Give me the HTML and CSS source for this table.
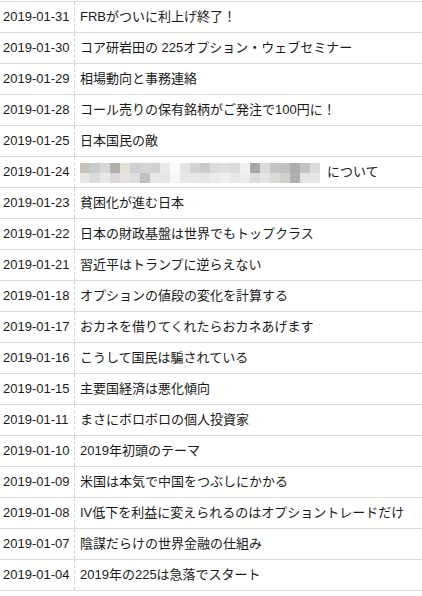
FILE: index.html
```html
<html>
	<head>
	<meta charset="utf-8"/>
		<link rel="stylesheet" href="styles.css">
	</head>
	<body>
		<div class="list">
			<div class="row"><div class="date">2019-01-31</div><div class="title">FRBがついに利上げ終了！</div></div>
			<div class="row"><div class="date">2019-01-30</div><div class="title">コア研岩田の 225オプション・ウェブセミナー</div></div>
			<div class="row"><div class="date">2019-01-29</div><div class="title">相場動向と事務連絡</div></div>
			<div class="row"><div class="date">2019-01-28</div><div class="title">コール売りの保有銘柄がご発注で100円に！</div></div>
			<div class="row"><div class="date">2019-01-25</div><div class="title">日本国民の敵</div></div>
			<div class="row"><div class="date">2019-01-24</div><div class="title">
				<svg class="mosaic" width="240" height="20" viewBox="0 0 240 20">
					<g>
						<rect x="0" y="0" width="10" height="10" fill="#c8c4bc"/>
						<rect x="10" y="0" width="10" height="10" fill="#c8ccce"/>
						<rect x="20" y="0" width="10" height="10" fill="#d8d8d6"/>
						<rect x="30" y="0" width="10" height="10" fill="#aeb0ae"/>
						<rect x="40" y="0" width="10" height="10" fill="#e4e0d4"/>
						<rect x="50" y="0" width="10" height="10" fill="#ccd0d4"/>
						<rect x="60" y="0" width="10" height="10" fill="#d4d4d4"/>
						<rect x="70" y="0" width="10" height="10" fill="#d0d2d0"/>
						<rect x="80" y="0" width="10" height="10" fill="#e8eae8"/>
						<rect x="90" y="0" width="10" height="10" fill="#fafafa"/>
						<rect x="100" y="0" width="10" height="10" fill="#e4e4e6"/>
						<rect x="110" y="0" width="10" height="10" fill="#d0d2d4"/>
						<rect x="120" y="0" width="10" height="10" fill="#cccac8"/>
						<rect x="130" y="0" width="10" height="10" fill="#dcdcde"/>
						<rect x="140" y="0" width="10" height="10" fill="#e0dede"/>
						<rect x="150" y="0" width="10" height="10" fill="#dadcdc"/>
						<rect x="160" y="0" width="10" height="10" fill="#eef0f0"/>
						<rect x="170" y="0" width="10" height="10" fill="#aaa6a2"/>
						<rect x="180" y="0" width="10" height="10" fill="#d8dcdc"/>
						<rect x="190" y="0" width="10" height="10" fill="#c4c2c2"/>
						<rect x="200" y="0" width="10" height="10" fill="#c0c2c0"/>
						<rect x="210" y="0" width="10" height="10" fill="#acaeae"/>
						<rect x="220" y="0" width="10" height="10" fill="#c0c4c4"/>
						<rect x="230" y="0" width="10" height="10" fill="#dcdcdc"/>
					</g>
					<g>
						<rect x="0" y="10" width="10" height="10" fill="#e8e6e2"/>
						<rect x="10" y="10" width="10" height="10" fill="#d8dcdc"/>
						<rect x="20" y="10" width="10" height="10" fill="#e8e8e8"/>
						<rect x="30" y="10" width="10" height="10" fill="#dcd8dc"/>
						<rect x="40" y="10" width="10" height="10" fill="#e4e2e0"/>
						<rect x="50" y="10" width="10" height="10" fill="#dcdee0"/>
						<rect x="60" y="10" width="10" height="10" fill="#c0c0c0"/>
						<rect x="70" y="10" width="10" height="10" fill="#e8e8ea"/>
						<rect x="80" y="10" width="10" height="10" fill="#e4e4e4"/>
						<rect x="90" y="10" width="10" height="10" fill="#f4f6f6"/>
						<rect x="100" y="10" width="10" height="10" fill="#e8e6ea"/>
						<rect x="110" y="10" width="10" height="10" fill="#e8e8e8"/>
						<rect x="120" y="10" width="10" height="10" fill="#e6e6e6"/>
						<rect x="130" y="10" width="10" height="10" fill="#eaeae8"/>
						<rect x="140" y="10" width="10" height="10" fill="#f0f0f0"/>
						<rect x="150" y="10" width="10" height="10" fill="#e4e8e8"/>
						<rect x="160" y="10" width="10" height="10" fill="#ececec"/>
						<rect x="170" y="10" width="10" height="10" fill="#dcdcd8"/>
						<rect x="180" y="10" width="10" height="10" fill="#e4e4e4"/>
						<rect x="190" y="10" width="10" height="10" fill="#dcdcd8"/>
						<rect x="200" y="10" width="10" height="10" fill="#d0d0cc"/>
						<rect x="210" y="10" width="10" height="10" fill="#b0b0b0"/>
						<rect x="220" y="10" width="10" height="10" fill="#e4e4e4"/>
						<rect x="230" y="10" width="10" height="10" fill="#e6e6e8"/>
					</g>
				</svg>
				<span class="after">について</span></div></div>
			<div class="row"><div class="date">2019-01-23</div><div class="title">貧困化が進む日本</div></div>
			<div class="row"><div class="date">2019-01-22</div><div class="title">日本の財政基盤は世界でもトップクラス</div></div>
			<div class="row"><div class="date">2019-01-21</div><div class="title">習近平はトランプに逆らえない</div></div>
			<div class="row"><div class="date">2019-01-18</div><div class="title">オプションの値段の変化を計算する</div></div>
			<div class="row"><div class="date">2019-01-17</div><div class="title">おカネを借りてくれたらおカネあげます</div></div>
			<div class="row"><div class="date">2019-01-16</div><div class="title">こうして国民は騙されている</div></div>
			<div class="row"><div class="date">2019-01-15</div><div class="title">主要国経済は悪化傾向</div></div>
			<div class="row"><div class="date">2019-01-11</div><div class="title">まさにボロボロの個人投資家</div></div>
			<div class="row"><div class="date">2019-01-10</div><div class="title">2019年初頭のテーマ</div></div>
			<div class="row"><div class="date">2019-01-09</div><div class="title">米国は本気で中国をつぶしにかかる</div></div>
			<div class="row"><div class="date">2019-01-08</div><div class="title">IV低下を利益に変えられるのはオプショントレードだけ</div></div>
			<div class="row"><div class="date">2019-01-07</div><div class="title">陰謀だらけの世界金融の仕組み</div></div>
			<div class="row"><div class="date">2019-01-04</div><div class="title">2019年の225は急落でスタート</div></div>
		</div>
	</body>
</html>
```

FILE: styles.css
```css
body{
	margin: 0;
	background: #fff;
	font-family: "Liberation Sans", "Noto Sans CJK JP", sans-serif;
	font-size: 13px;
	color: #1a1a1a;
}
.list{
	padding-top: 1px;
}
.row{
	display: flex;
	height: 30px;
	border-top: 1px solid #dcdcdc;
}
.row:last-child{
	border-bottom: 1px solid #dcdcdc;
}
.date{
	width: 71px;
	padding-left: 3px;
	border-right: 1px dashed #d0d0d0;
	line-height: 30px;
	white-space: nowrap;
}
.title{
	display: flex;
	align-items: center;
	padding-left: 5px;
	line-height: 30px;
	white-space: nowrap;
}
.mosaic{
	display: block;
	margin-top: 2px;
}
.after{
	margin-left: 7px;
}
```
